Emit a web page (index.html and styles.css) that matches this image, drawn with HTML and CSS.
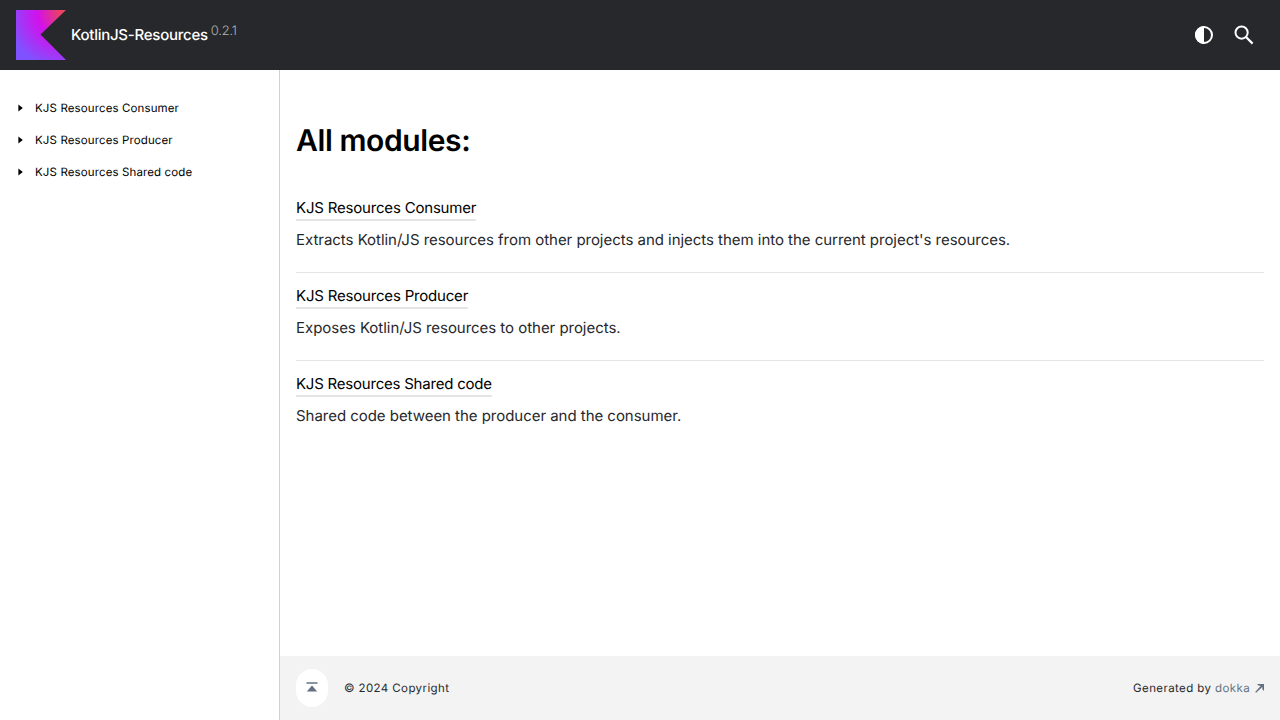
FILE: index.html
```
<!DOCTYPE html>
<html lang="en">
<head>
<meta charset="utf-8">
<title>All modules</title>
<link rel="stylesheet" href="styles.css">
</head>
<body>
<header class="navigation">
  <svg class="logo" width="50" height="50" viewBox="0 0 50 50">
    <defs><radialGradient id="kotlin" gradientUnits="userSpaceOnUse" cx="48.3" cy="2" r="57.3">
      <stop offset="0.003" stop-color="#ef4857"/><stop offset="0.15" stop-color="#e5397a"/><stop offset="0.47" stop-color="#d211ec"/><stop offset="1" stop-color="#7f52ff"/>
    </radialGradient></defs>
    <path fill="url(#kotlin)" d="M50 50H0V0H50L24.5 24.5Z"/>
  </svg>
  <a class="library-name">KotlinJS-Resources</a>
  <span class="library-version">0.2.1</span>
  <div class="controls">
    <button class="control" aria-label="Switch theme"><svg width="18" height="18" viewBox="0 0 18 18"><circle cx="9" cy="9" r="8" fill="none" stroke="#fff" stroke-width="2"/><path fill="#fff" d="M9 0A9 9 0 0 0 9 18Z"/></svg></button>
    <button class="control" aria-label="Search"><svg width="20" height="20" viewBox="0 0 20 20"><circle cx="7.6" cy="7.6" r="6.1" fill="none" stroke="#fff" stroke-width="2"/><path d="M12 12L18.6 18.6" stroke="#fff" stroke-width="2.2"/></svg></button>
  </div>
</header>
<div class="container">
  <nav class="sidebar">
    <a class="toc-item"><svg class="arrow" width="5" height="8" viewBox="0 0 5 8"><path d="M.4.5L4.8 4L.4 7.5Z"/></svg><span>KJS Resources Consumer</span></a>
    <a class="toc-item"><svg class="arrow" width="5" height="8" viewBox="0 0 5 8"><path d="M.4.5L4.8 4L.4 7.5Z"/></svg><span>KJS Resources Producer</span></a>
    <a class="toc-item"><svg class="arrow" width="5" height="8" viewBox="0 0 5 8"><path d="M.4.5L4.8 4L.4 7.5Z"/></svg><span>KJS Resources Shared code</span></a>
  </nav>
  <div class="main">
    <main class="content">
      <h1 class="title">All modules:</h1>
      <section class="module"><a class="module-link">KJS Resources Consumer</a><p class="brief">Extracts Kotlin/JS resources from other projects and injects them into the current project's resources.</p></section>
      <section class="module"><a class="module-link">KJS Resources Producer</a><p class="brief">Exposes Kotlin/JS resources to other projects.</p></section>
      <section class="module"><a class="module-link shared">KJS Resources Shared code</a><p class="brief">Shared code between the producer and the consumer.</p></section>
    </main>
    <footer class="footer">
      <a class="to-top" aria-label="Go to top"><svg width="12" height="10" viewBox="0 0 12 10"><path fill="#637282" fill-opacity=".75" d="M.5 0H11.5V2H.5Z"/><path fill="#637282" d="M6 3.5L11.2 9.5H.8Z"/></svg></a>
      <span class="copyright">© 2024 Copyright</span>
      <span class="generated">Generated by <a class="dokka">dokka</a></span>
      <svg class="external" width="9" height="9" viewBox="0 0 9 9"><path fill="#637282" d="M2 0H9V7L7.3 5.2V3L1.1 8.8L.2 7.9L5.8 1.8H3.8Z"/></svg>
    </footer>
  </div>
</div>
</body>
</html>
```
FILE: styles.css
```
* { box-sizing: border-box; }
body { margin: 0; height: 100vh; overflow: hidden; display: flex; flex-direction: column; background: #fff; color: #27282c; font: 15px/24px Inter, "Liberation Sans", sans-serif; text-rendering: geometricPrecision; }
.navigation { flex: 0 0 70px; display: flex; align-items: center; padding: 0 16px; background: #27282c; color: #fff; }
.logo { margin-right: 5px; }
.library-name { font-weight: 500; letter-spacing: -0.25px; }
.library-version { margin-left: 3px; padding-bottom: 9px; color: #b0b1b3; font-size: 13px; font-weight: 300; letter-spacing: -0.25px; }
.controls { display: flex; margin-left: auto; }
.control { display: flex; align-items: center; justify-content: center; width: 40px; height: 40px; padding: 0; border: 0; background: transparent; }
.container { flex: 1; display: flex; min-height: 0; }
.sidebar { width: 280px; padding-top: 22px; border-right: 1px solid #d0d0d1; }
.toc-item { display: flex; align-items: center; height: 32px; padding-left: 18px; color: #000; font-size: 11.5px; letter-spacing: 0.12px; }
.arrow { margin-right: 12px; }
.main { flex: 1; display: flex; flex-direction: column; }
.content { flex: 1; padding: 51px 16px 0; }
.title { margin: 0 0 35px; color: #000; font-size: 30px; line-height: 40px; font-weight: 600; letter-spacing: -0.4px; }
.module { height: 77px; margin-bottom: 11px; border-bottom: 1px solid #e5e5e6; }
.module:last-child { border-bottom: 0; }
.module-link { display: block; width: fit-content; height: 25px; border-bottom: 2px solid #e5e5e6; color: #000; white-space: nowrap; letter-spacing: -0.19px; }
.shared { letter-spacing: -0.22px; }
.brief { margin: 7px 0 0; white-space: nowrap; letter-spacing: -0.035px; }
.footer { flex: 0 0 64px; display: flex; align-items: center; padding: 0 16px; background: #f3f3f3; font-size: 11.5px; letter-spacing: .4px; }
.to-top { display: flex; align-items: center; justify-content: center; width: 32px; height: 38px; margin-right: 16px; border-radius: 16px; background: #fff; }
.to-top svg { margin-bottom: 2px; }
.generated { margin-left: auto; }
.dokka { color: #637282; }
.external { margin-left: 5px; }
```
